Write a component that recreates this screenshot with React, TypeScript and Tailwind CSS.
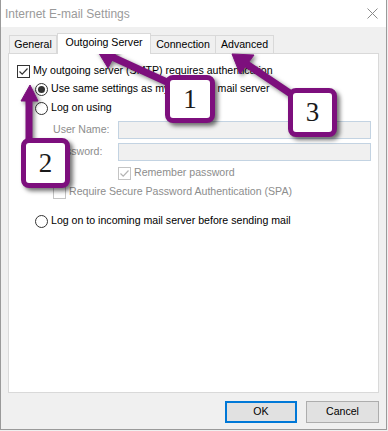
import React from 'react';

const Check = ({ checked, disabled }: { checked?: boolean; disabled?: boolean }) => (
  <span
    className={`w-[13px] h-[13px] border flex items-center justify-center bg-white shrink-0 ${
      disabled ? 'border-[#c4c4c4]' : 'border-[#333333]'
    }`}
  >
    {checked && (
      <svg width="11" height="11" viewBox="0 0 11 11">
        <path
          d="M1.5 5.5 L4.2 8.2 L9.5 2.5"
          fill="none"
          stroke={disabled ? '#b4b4b4' : '#333333'}
          strokeWidth="1.2"
        />
      </svg>
    )}
  </span>
);

const Radio = ({ checked }: { checked?: boolean }) => (
  <span className="w-[13px] h-[13px] rounded-full border border-[#333333] bg-white flex items-center justify-center shrink-0">
    {checked && <span className="w-[7px] h-[7px] rounded-full bg-[#333333]" />}
  </span>
);

const Callout = ({ n, pos }: { n: string; pos: string }) => (
  <div
    className={`absolute ${pos} border-[5px] border-[#7d0f7d] rounded-[8px] bg-white flex items-center justify-center font-['Liberation_Serif',serif] text-[27px] text-[#1a1a1a] shadow-[3px_3px_4px_rgba(0,0,0,0.55)]`}
  >
    {n}
  </div>
);

export default function App() {
  return (
    <div className="relative w-[388px] h-[431px] overflow-hidden bg-[#f0f0f0] font-['Liberation_Sans',sans-serif] text-[10.6px] text-[#000000]">
      <div className="w-[387px] h-[430px] border-l border-r border-b border-[#9a9a9a] flex flex-col">
        {/* title bar */}
        <div className="h-[27px] bg-white flex items-center justify-between pl-[4px] pr-[8px] shrink-0">
          <span className="text-[12px] text-[#9a9a9a]">Internet E-mail Settings</span>
          <svg width="11" height="11" viewBox="0 0 11 11">
            <path d="M0.5 0.5 L10.5 10.5 M10.5 0.5 L0.5 10.5" stroke="#8a8a8a" strokeWidth="1" />
          </svg>
        </div>

        <div className="px-[7px] pt-[6px] flex flex-col">
          {/* tabs */}
          <div className="flex items-end h-[20px] pl-[1px]">
            <div className="w-[48px] h-[18px] border border-b-0 border-[#d9d9d9] bg-[#f0f0f0] flex items-center justify-center">
              General
            </div>
            <div className="relative z-10 -mb-px w-[94px] h-[21px] border border-b-0 border-[#d9d9d9] bg-white flex items-center justify-center pb-[2px]">
              Outgoing Server
            </div>
            <div className="w-[65px] h-[18px] border border-b-0 border-l-0 border-[#d9d9d9] bg-[#f0f0f0] flex items-center justify-center">
              Connection
            </div>
            <div className="w-[58px] h-[18px] border border-b-0 border-l-0 border-[#d9d9d9] bg-[#f0f0f0] flex items-center justify-center">
              Advanced
            </div>
          </div>

          {/* panel */}
          <div className="h-[340px] border border-[#d9d9d9] bg-white pl-[8px] pt-[8px] flex flex-col">
            <div className="h-[18px] flex items-center gap-[3px]">
              <Check checked />
              <span>My outgoing server (SMTP) requires authentication</span>
            </div>
            <div className="h-[18px] flex items-center gap-[3px] ml-[18px]">
              <Radio checked />
              <span>Use same settings as my incoming mail server</span>
            </div>
            <div className="h-[18px] mt-[1px] flex items-center gap-[3px] ml-[18px]">
              <Radio />
              <span>Log on using</span>
            </div>
            <div className="h-[18px] mt-[4px] flex items-center ml-[36px]">
              <span className="w-[65px] text-[#8d8d8d]">User Name:</span>
              <div className="w-[253px] h-[18px] border border-[#c3d3e2] bg-[#f0f0f0]" />
            </div>
            <div className="h-[18px] mt-[4px] flex items-center ml-[36px]">
              <span className="w-[65px] text-[#8d8d8d]">Password:</span>
              <div className="w-[253px] h-[18px] border border-[#c3d3e2] bg-[#f0f0f0]" />
            </div>
            <div className="h-[18px] mt-[3px] flex items-center gap-[3px] ml-[101px]">
              <Check checked disabled />
              <span className="text-[#8d8d8d]">Remember password</span>
            </div>
            <div className="h-[18px] mt-[1px] flex items-center gap-[3px] ml-[36px]">
              <Check disabled />
              <span className="text-[#8d8d8d]">Require Secure Password Authentication (SPA)</span>
            </div>
            <div className="h-[18px] mt-[11px] flex items-center gap-[3px] ml-[18px]">
              <Radio />
              <span>Log on to incoming mail server before sending mail</span>
            </div>
          </div>

          {/* buttons */}
          <div className="flex justify-end gap-[9px] mt-[8px]">
            <button className="w-[72px] h-[22px] border-2 border-[#0078d7] bg-[#e1e1e1] text-[10.6px]">
              OK
            </button>
            <button className="w-[73px] h-[22px] border border-[#adadad] bg-[#e1e1e1] text-[10.6px]">
              Cancel
            </button>
          </div>
        </div>
      </div>

      {/* annotations */}
      <svg
        className="absolute left-0 top-0 pointer-events-none drop-shadow-[2px_2px_2px_rgba(0,0,0,0.5)]"
        width="388"
        height="431"
        viewBox="0 0 388 431"
      >
        <g fill="#7d0f7d" stroke="#7d0f7d">
          <line x1="180" y1="88" x2="110" y2="56" strokeWidth="7" />
          <polygon points="97,50 108,68 119,47" strokeWidth="1" />
          <line x1="300" y1="100" x2="245" y2="63" strokeWidth="7" />
          <polygon points="232,54 240,74 254,55" strokeWidth="1" />
          <line x1="29" y1="145" x2="29" y2="98" strokeWidth="7" />
          <polygon points="30,85 21,101 38,101" strokeWidth="1" />
        </g>
      </svg>
      <Callout n="1" pos="left-[165px] top-[75px] w-[50px] h-[48px]" />
      <Callout n="3" pos="left-[288px] top-[88px] w-[49px] h-[49px]" />
      <Callout n="2" pos="left-[21px] top-[138px] w-[49px] h-[50px]" />
    </div>
  );
}
